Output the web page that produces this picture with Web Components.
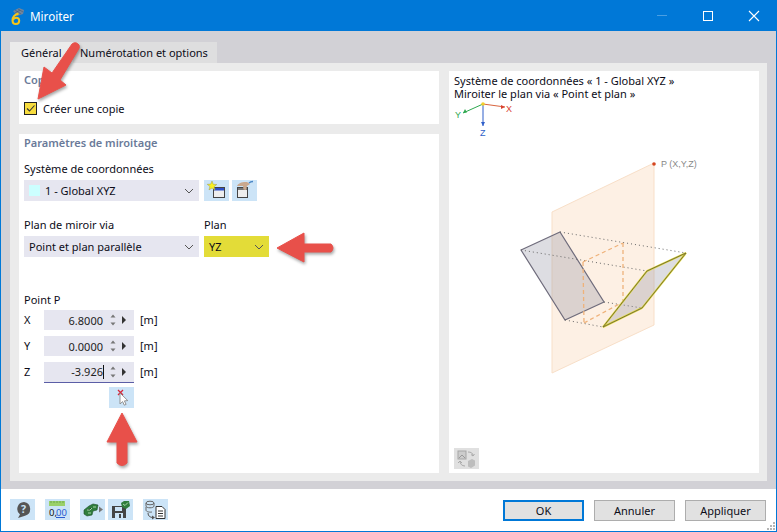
<!DOCTYPE html>
<html lang="fr">
<head>
<meta charset="utf-8">
<title>Miroiter</title>
<style>
  html, body { margin: 0; padding: 0; }
  body { width: 777px; height: 532px; overflow: hidden; font: 11px "Noto Sans", "Liberation Sans", sans-serif; color: #0c0c18; }
</style>
</head>
<body>
<dlg-window>
  <title-bar slot="title">Miroiter</title-bar>

  <dlg-tabs slot="tabs"></dlg-tabs>

  <group-box slot="copy" heading="Copie" style="height:53px">
    <check-box style="margin-top:13px">Créer une copie</check-box>
  </group-box>

  <group-box slot="params" heading="Paramètres de miroitage" style="flex:1">
    <field-label style="margin-top:9px">Système de coordonnées</field-label>
    <div style="display:flex;gap:5px;align-items:flex-start">
      <combo-box swatch style="width:175px">1 - Global XYZ</combo-box>
      <div style="display:flex;gap:3px">
        <icon-btn icon="new"></icon-btn>
        <icon-btn icon="pick"></icon-btn>
      </div>
    </div>
    <div style="display:flex;gap:5px;margin-top:16px">
      <div>
        <field-label>Plan de miroir via</field-label>
        <combo-box style="width:175px">Point et plan parallèle</combo-box>
      </div>
      <div>
        <field-label>Plan</field-label>
        <combo-box highlight style="width:65px">YZ</combo-box>
      </div>
    </div>
    <field-label style="margin-top:35px;height:18px">Point P</field-label>
    <div style="display:flex;flex-direction:column;gap:5px">
      <spin-row axis="X" value="6.8000"></spin-row>
      <spin-row axis="Y" value="0.0000"></spin-row>
      <spin-row axis="Z" value="-3.926" active></spin-row>
    </div>
    <icon-btn icon="cursor" style="margin:4px 0 0 85px"></icon-btn>
  </group-box>

  <group-box slot="preview" style="height:100%">
    <mirror-diagram></mirror-diagram>
  </group-box>

  <icon-btn slot="foot-left" icon="help"></icon-btn>
  <icon-btn slot="foot-left" icon="units" style="margin-left:10px"></icon-btn>
  <icon-btn slot="foot-left" icon="model" style="margin-left:10px"></icon-btn>
  <icon-btn slot="foot-left" icon="save" style="margin-left:3px"></icon-btn>
  <icon-btn slot="foot-left" icon="list" style="margin-left:10px"></icon-btn>

  <dlg-button slot="foot-right" primary>OK</dlg-button>
  <dlg-button slot="foot-right">Annuler</dlg-button>
  <dlg-button slot="foot-right">Appliquer</dlg-button>

  <callout-arrows slot="overlay"></callout-arrows>
</dlg-window>

<script>
// small base class, every element just fills its open shadow root once
class ShadowEl extends HTMLElement {
  connectedCallback() {
    if (this.shadowRoot) return;
    this.attachShadow({ mode: 'open' });
    this.shadowRoot.innerHTML = this.render();
  }
}

class DlgWindow extends ShadowEl {
  render() {
    return `
      <style>
        :host { display: flex; flex-direction: column; width: 777px; height: 532px; box-sizing: border-box;
                position: relative; background: #fff; border: solid #0078d7; border-width: 0 1px 1px 1px; }
        .body { flex: 1; display: flex; flex-direction: column; background: #d2d1d6; padding: 11px 9px 8px 9px; min-height: 0; }
        .panel { flex: 1; display: flex; gap: 10px; background: #ebebeb; padding: 8px 8px 8px 9px; min-height: 0; }
        .left { width: 420px; display: flex; flex-direction: column; gap: 10px; }
        .right { flex: 1; }
        footer { height: 42px; display: flex; justify-content: space-between; align-items: flex-start;
                 padding: 10px 9px 0 9px; box-sizing: border-box; position: relative; }
        .l { display: flex; }
        .r { display: flex; gap: 10px; margin: 1px 1px 0 0; }
        .grip { position: absolute; right: 1px; bottom: 1px; }
      </style>
      <slot name="title"></slot>
      <div class="body">
        <slot name="tabs"></slot>
        <div class="panel">
          <div class="left"><slot name="copy"></slot><slot name="params"></slot></div>
          <div class="right"><slot name="preview"></slot></div>
        </div>
      </div>
      <footer>
        <div class="l"><slot name="foot-left"></slot></div>
        <div class="r"><slot name="foot-right"></slot></div>
        <svg class="grip" width="9" height="9"><path d="M7 1h2v2H7ZM4 4h2v2H4ZM7 4h2v2H7ZM1 7h2v2H1ZM4 7h2v2H4ZM7 7h2v2H7Z" fill="#b5b5b5"/></svg>
      </footer>
      <slot name="overlay"></slot>`;
  }
}

class TitleBar extends ShadowEl {
  render() {
    return `
      <style>
        :host { display: flex; align-items: center; height: 31px; background: #0078d7; color: #fff; font-size: 11.7px; flex: none; margin: 0 -1px; }
        .logo { margin: 2px 5px 0 9px; flex: none; }
        .txt { flex: 1; }
        .ctl { width: 46px; height: 31px; display: flex; align-items: center; justify-content: center; }
      </style>
      <svg class="logo" width="16" height="19" viewBox="0 0 16 19">
        <path d="M4 4 L10 1 L15 3 L14 7 L8 9 Z" fill="#71859c"/>
        <path d="M6 3l6 4M9 2l5 3M6 6l5-3" stroke="#3f5269" stroke-width=".5"/>
        <path d="M9.500 6.500C6 7.500 3.500 10 3.500 13.500 3.500 15.800 5 17 6.800 17 8.800 17 10.200 15.600 10.200 13.800 10.200 12 8.800 10.800 7.200 10.800 5.800 10.800 4.500 11.600 3.800 13" fill="none" stroke="#f5c518" stroke-width="2"/>
      </svg>
      <span class="txt"><slot></slot></span>
      <span class="ctl"><svg width="12" height="12"><path d="M1 5.500h10" stroke="#4a9fe3" stroke-width="1"/></svg></span>
      <span class="ctl"><svg width="12" height="12"><rect x="1.500" y="1.500" width="9" height="9" fill="none" stroke="#fff"/></svg></span>
      <span class="ctl"><svg width="12" height="12"><path d="M1 1l10 10M11 1L1 11" stroke="#fff" stroke-width="1.100"/></svg></span>`;
  }
}

class DlgTabs extends ShadowEl {
  render() {
    return `
      <style>
        :host { display: flex; height: 21px; flex: none; }
        span { display: flex; align-items: center; height: 21px; }
        .on { width: 52px; padding-left: 11px; background: #ebebeb; }
        .off { width: 137px; padding-left: 7px; background: #dededf; }
      </style>
      <span class="on">Général</span><span class="off">Numérotation et options</span>`;
  }
}

class GroupBox extends ShadowEl {
  render() {
    const h = this.getAttribute('heading');
    return `
      <style>
        :host { display: flex; flex-direction: column; background: #fff; padding: 0 5px; box-sizing: border-box; }
        .h { height: 18px; line-height: 18px; color: #6a7a99; font-weight: 600; }
      </style>
      ${h ? `<div class="h">${h}</div>` : ''}
      <slot></slot>`;
  }
}

class CheckBox extends ShadowEl {
  render() {
    return `
      <style>
        :host { display: flex; align-items: center; gap: 6px; height: 13px; }
        .box { width: 13px; height: 13px; box-sizing: border-box; border: 1px solid #222; background: #f7dc3e; display: block; }
      </style>
      <svg class="box" viewBox="0 0 11 11"><path d="M2 5.500 L4.500 8 L9.500 2.500" fill="none" stroke="#333" stroke-width="1.100"/></svg>
      <slot></slot>`;
  }
}

class FieldLabel extends ShadowEl {
  render() {
    return `
      <style>:host { display: block; height: 19px; line-height: 15px; }</style>
      <slot></slot>`;
  }
}

class ComboBox extends ShadowEl {
  render() {
    const sw = this.hasAttribute('swatch');
    const bg = this.hasAttribute('highlight') ? '#e3dc38' : '#e6e6f0';
    return `
      <style>
        :host { display: flex; align-items: center; height: 21px; background: ${bg}; padding-left: 5px; box-sizing: border-box; }
        .sw { width: 11px; height: 11px; background: #ccffff; margin-right: 5px; }
        .t { flex: 1; white-space: nowrap; }
        svg { margin-right: 5px; }
      </style>
      ${sw ? '<span class="sw"></span>' : ''}
      <span class="t"><slot></slot></span>
      <svg width="10" height="6"><path d="M1 1l4 4 4-4" fill="none" stroke="#555"/></svg>`;
  }
}

class SpinRow extends ShadowEl {
  render() {
    const z = this.hasAttribute('active');
    return `
      <style>
        :host { display: flex; align-items: flex-start; height: 21px; }
        .a { width: 20px; line-height: 20px; }
        .f { width: 90px; height: 20px; background: #e6e6f0; display: flex; align-items: center; position: relative;
             ${z ? 'border-bottom: 1px solid #5b5ea6;' : ''} }
        .v { width: 59px; text-align: right; color: #222; ${z ? 'border-right: 1px solid #111; margin-right: -1px; line-height: 14px;' : ''} }
        svg { margin-left: 7px; }
        .m { margin-left: 6px; line-height: 20px; }
      </style>
      <span class="a">${this.getAttribute('axis')}</span>
      <span class="f"><span class="v">${this.getAttribute('value')}</span>
        <svg width="6" height="12"><path d="M3 .5L5.500 3.500H.5Z M3 11.500L.5 8.500H5.500Z" fill="#777"/></svg>
        <svg width="4" height="8" style="margin-left:6px"><path d="M0 0L4 4L0 8Z" fill="#333"/></svg>
      </span>
      <span class="m">[m]</span>`;
  }
}

const ICONS = {
  new: `<rect x="9.500" y="7.500" width="11" height="10" fill="#eee" stroke="#444"/><rect x="10" y="8" width="10" height="2.500" fill="#2b4fc9"/>
        <path d="M8 1l1.300 3.300 3.500.2-2.700 2.200.9 3.400L8 8l-3 1.900.9-3.400-2.700-2.200 3.500-.2Z" fill="#f8f020" stroke="#9a9a55" stroke-width=".5"/>`,
  pick: `<rect x="5.500" y="7.500" width="10" height="10" fill="#eee" stroke="#444"/><rect x="6" y="8" width="9" height="2" fill="#777"/>
        <path d="M5 6c1-3 6-4.500 10-4l3 2-3 2-1 4-2.500-.5L11 6Z" fill="#c9a88e"/><path d="M17 3c1-1 3-1.500 4-1.500" stroke="#4a86c5" stroke-width="1.500" fill="none"/>`,
  cursor: `<path d="M9 3l5 5M14 3L9 8" stroke="#d8263a" stroke-width="1.300"/>
        <path d="M11 6v11l2.600-2.400 1.700 3.600 1.800-.8-1.700-3.500 3.400-.3Z" fill="#fff" stroke="#888" stroke-width=".9"/>`,
  help: `<path d="M14 3a7 7 0 0 1 1 13.700L8 19l2-3.500A7 7 0 0 1 14 3Z" fill="#555"/>
        <text x="13.500" y="14" font-size="10.500" font-weight="700" text-anchor="middle" fill="#cce4f7" font-family="Noto Sans">?</text>`,
  units: `<rect x="4" y="2" width="16" height="5" fill="#9ad06a"/><path d="M6 2v2M9 2v2M12 2v2M15 2v2M18 2v2" stroke="#5c9a40" stroke-width=".7"/>
        <text x="4" y="16.500" font-size="9.500" fill="#111" font-family="Noto Sans">0,</text>
        <text x="11" y="16.500" font-size="9.500" fill="#2a5bd0" font-family="Noto Sans">00</text><path d="M11 18.500h9" stroke="#2a5bd0"/>`,
  model: `<path d="M4 11l5-4 4-2 5 1-1 5-4 1-1 4-5 1-3-2Z" fill="#2f7d3c" stroke="#1c4f27" stroke-width=".6"/><path d="M7 11h3l2-2M8 14h3M13 8h3" stroke="#a9d6a9"/>
        <path d="M19 7.500l4 3-4 3Z" fill="#777"/>`,
  save: `<path d="M4 7h12l2 2v10H4Z" fill="#444"/><rect x="7" y="8" width="7" height="4" fill="#cce4f7"/><rect x="7" y="14" width="8" height="5" fill="#cce4f7"/><rect x="11" y="15" width="2" height="4" fill="#444"/>
        <path d="M13 4l3-2h5l1 5-4 3-4-2Z" fill="#2f7d3c"/><path d="M15 5l2 1.500 3-3" stroke="#a9d6a9" fill="none"/>`,
  list: `<ellipse cx="7" cy="4" rx="4" ry="1.800" fill="none" stroke="#666"/><path d="M3 4v3c0 2.400 8 2.400 8 0V4M3 8v3c0 2 4 2.400 6 2" fill="none" stroke="#666"/>
        <path d="M5 14c0 3 2 4.500 5 4.500" fill="none" stroke="#555"/><path d="M9 16.500l3 2-3 2Z" fill="#555"/>
        <path d="M13 7.500h6l3 3v9h-9Z" fill="#fff" stroke="#333"/><path d="M15 12h5M15 14.500h5M15 17h5" stroke="#333"/>`,
  views: `<rect x="4" y="3" width="8" height="8" fill="#ccc" stroke="#a5a5a5"/><path d="M5 10l3-3 3 3" stroke="#999" fill="none"/>
        <path d="M14 4c3 0 5 1 5 4M19 8l-2-1.500M19 8l1.500-2" stroke="#aaa" fill="none"/><path d="M6 13c0 3 2 5 5 5M6 13l-2 2M6 13l2 2" stroke="#aaa" fill="none"/>
        <path d="M14 13l4-2 3 1.500v5L17 20l-3-1.500Z" fill="#bdbdbd"/>`
};

class IconBtn extends ShadowEl {
  render() {
    const name = this.getAttribute('icon');
    const bg = name === 'views' ? '#e0e0e0' : '#cce4f7';
    return `
      <style>
        :host { display: block; width: 25px; height: 21px; background: ${bg}; flex: none; }
        svg { display: block; }
      </style>
      <svg width="25" height="21" viewBox="0 0 25 21">${ICONS[name]}</svg>`;
  }
}

class DlgButton extends ShadowEl {
  render() {
    const p = this.hasAttribute('primary');
    return `
      <style>
        :host { display: flex; align-items: center; justify-content: center; width: 81px; height: 21px; box-sizing: border-box;
                background: #e1e1e1; border: ${p ? '2px solid #0078d7' : '1px solid #adadad'}; }
      </style>
      <slot></slot>`;
  }
}

class MirrorDiagram extends ShadowEl {
  render() {
    // svg coordinates are the same as the group box origin at 449,71
    const p = pts => pts.map(([x, y]) => `${x - 449},${y - 71}`).join(' ');
    const line = (a, b, attrs) => `<polyline points="${p([a, b])}" ${attrs}/>`;
    const dot = 'stroke="#666" stroke-width="1" stroke-dasharray="1 3" fill="none"';
    const dash = 'stroke="#efb27a" stroke-width="1.300" stroke-dasharray="4 3" fill="none"';
    return `
      <style>
        :host { display: block; position: relative; height: 100%; margin: 0; }
        .cap { padding-top: 3px; line-height: 13px; white-space: nowrap; }
        svg { position: absolute; left: -5px; top: 0; width: 309px; height: 402px; }
        svg text { font-family: "Liberation Sans", sans-serif; }
        icon-btn { position: absolute; left: 0; top: 377px; }
      </style>
      <div class="cap">Système de coordonnées « 1 - Global XYZ »<br>Miroiter le plan via « Point et plan »</div>
      <svg viewBox="0 0 309 402">
        <polygon points="${p([[552,212],[654,163],[654,325],[552,373]])}" fill="#fdf0e4" stroke="#f8dfc8"/>
        <polygon points="${p([[521,250],[560,232],[604,302],[565,320]])}" fill="#8f8f9f" fill-opacity=".3" stroke="#6f6c7c" stroke-width="1.200"/>
        ${line([560,232],[686,253],dot)}${line([521,250],[647,271],dot)}${line([604,302],[642,308],dot)}${line([565,320],[603,327],dot)}
        ${line([583,262],[623,243],dash)}${line([583,262],[584,323],dash)}${line([623,243],[623,302],dash)}${line([584,323],[623,302],dash)}
        <polygon points="${p([[686,253],[647,271],[603,327],[642,308]])}" fill="#8f8f9f" fill-opacity=".3" stroke="#e3dc38" stroke-width="2"/>
        <polygon points="${p([[686,253],[647,271],[603,327],[642,308]])}" fill="none" stroke="#6a6440" stroke-width=".9"/>
        <circle cx="${654-449}" cy="${164-71}" r="1.800" fill="#d4451f"/>
        <text x="${661-449}" y="${167-71}" font-size="9" fill="#888">P (X,Y,Z)</text>
        <!-- axis cross -->
        ${line([483,104],[505,107],'stroke="#d9653f" fill="none"')}<path d="M${505-449} ${107-71}l-4-2v4Z" fill="#d9412f"/>
        ${line([483,104],[463,113],'stroke="#2ea84f" fill="none"')}<path d="M${463-449} ${113-71}l4-.5-2-3.500Z" fill="#2ea84f"/>
        ${line([483,104],[483,126],'stroke="#2f5fc9" fill="none"')}<path d="M${483-449} ${126-71}l-2-4h4Z" fill="#2f5fc9"/>
        <circle cx="${483-449}" cy="${104-71}" r="1.800" fill="#f3cf2a"/>
        <text x="${506-449}" y="${112-71}" font-size="9" fill="#d9412f">X</text>
        <text x="${455-449}" y="${118-71}" font-size="9" fill="#2ea84f">Y</text>
        <text x="${480-449}" y="${136-71}" font-size="9" fill="#2f5fc9">Z</text>
      </svg>
      <icon-btn icon="views"></icon-btn>`;
  }
}

class CalloutArrows extends ShadowEl {
  render() {
    const red = 'fill="#e8504a" stroke="#e8504a" stroke-linejoin="round" stroke-width="1"';
    return `
      <style>
        :host { position: absolute; left: -1px; top: 0; width: 777px; height: 532px; pointer-events: none; }
        svg { display: block; filter: drop-shadow(1px 2px 1.500px rgba(0,0,0,.35)); }
      </style>
      <svg width="777" height="532" viewBox="0 0 777 532">
        <path d="M38 99 L44 67 L52 73 L72 44 Q76 41 79 45 Q80 48 78 50 L60 80 L66 85Z" ${red}/>
        <path d="M277 248 L304 233 L304 244 L331 244 Q335 248 331 252 L304 252 L304 262Z" ${red}/>
        <path d="M122 413 L137 442 L127 442 L127 463 Q122 468 117 463 L117 442 L107 442Z" ${red}/>
      </svg>`;
  }
}

customElements.define('dlg-window', DlgWindow);
customElements.define('title-bar', TitleBar);
customElements.define('dlg-tabs', DlgTabs);
customElements.define('group-box', GroupBox);
customElements.define('check-box', CheckBox);
customElements.define('field-label', FieldLabel);
customElements.define('combo-box', ComboBox);
customElements.define('spin-row', SpinRow);
customElements.define('icon-btn', IconBtn);
customElements.define('dlg-button', DlgButton);
customElements.define('mirror-diagram', MirrorDiagram);
customElements.define('callout-arrows', CalloutArrows);
</script>
</body>
</html>
